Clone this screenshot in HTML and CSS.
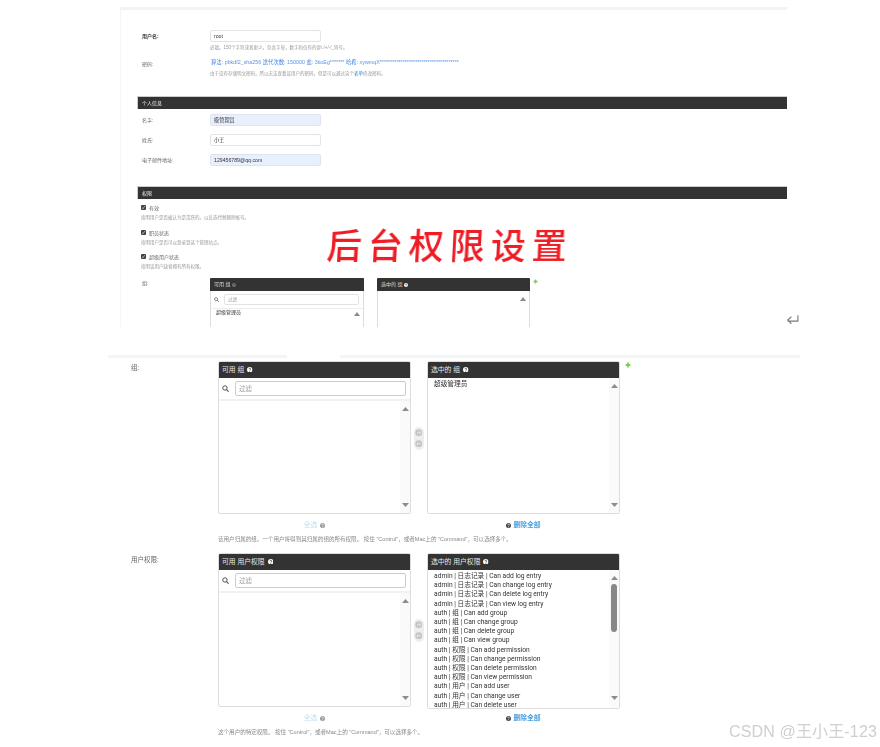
FILE: index.html
```html
<!DOCTYPE html>
<html lang="zh-CN">
<head>
<meta charset="utf-8">
<title>后台权限设置</title>
<link rel="stylesheet" href="styles.css">
</head>
<body>
<svg class="defs" width="0" height="0" aria-hidden="true">
  <symbol id="i-q" viewBox="0 0 10 10"><circle cx="5" cy="5" r="5" fill="currentColor"/><path class="q-mark" d="M3.400 4a1.700 1.600 0 1 1 2.400 1.400c-.6.3-.8.6-.8 1.100M5 7.200v1.200" fill="none" stroke-width="1.300"/></symbol>
  <symbol id="i-search" viewBox="0 0 10 10"><circle cx="4.200" cy="4.200" r="3.100" fill="none" stroke="currentColor" stroke-width="1.300"/><path d="M6.500 6.500 9.400 9.400" stroke="currentColor" stroke-width="1.600"/></symbol>
  <symbol id="i-plus" viewBox="0 0 10 10"><path d="M5 1v8M1 5h8" stroke="#7ed04b" stroke-width="3"/></symbol>
  <symbol id="i-add" viewBox="0 0 10 10"><circle cx="5" cy="5" r="4.600" fill="#c6c6c6"/><path d="M2.500 5h5M5.400 3l2.100 2-2.100 2" fill="none" stroke="#eee" stroke-width="1"/></symbol>
  <symbol id="i-rem" viewBox="0 0 10 10"><circle cx="5" cy="5" r="4.600" fill="#c6c6c6"/><path d="M2.500 5h5M4.600 3 2.500 5l2.100 2" fill="none" stroke="#eee" stroke-width="1"/></symbol>
  <symbol id="i-up" viewBox="0 0 10 6" preserveAspectRatio="none"><path d="M5 0 10 6H0z" fill="#8c8c8c"/></symbol>
  <symbol id="i-down" viewBox="0 0 10 6" preserveAspectRatio="none"><path d="M5 6 10 0H0z" fill="#8c8c8c"/></symbol>
</svg>

<div class="canvas">
  <section class="shot-a">
    <div class="row">
      <span class="label label-strong">用户名:</span>
      <span class="input">root</span>
    </div>
    <p class="help help-first">必填。150个字符或者更少。包含字母，数字和仅有的@/./+/-/_符号。</p>
    <div class="row row-pass">
      <span class="label label-pass">密码:</span>
      <span class="hash"><b>算法:</b> pbkdf2_sha256 <b>迭代次数:</b> 150000 <b>盐:</b> 3tioEg******* <b>哈希:</b> xywmqX**************************************</span>
    </div>
    <p class="help help-pass">由于没有存储明文密码，所以无法查看该用户的密码，但是可以通过这个<a class="help-link">表单</a>修改密码。</p>

    <h2 class="bar bar-first">个人信息</h2>
    <div class="row row-first"><span class="label">名字:</span><span class="input input-fill">级管理员</span></div>
    <div class="row row-next"><span class="label">姓氏:</span><span class="input">小王</span></div>
    <div class="row row-next"><span class="label">电子邮件地址:</span><span class="input input-fill">129456789@qq.com</span></div>

    <h2 class="bar">权限</h2>
    <div class="checks">
      <div class="check-item">
        <div class="check"><span class="box">✓</span>有效</div>
        <p class="help help-check">指明用户是否被认为是活跃的。以反选代替删除帐号。</p>
      </div>
      <div class="check-item">
        <div class="check"><span class="box">✓</span>职员状态</div>
        <p class="help help-check">指明用户是否可以登录到这个管理站点。</p>
      </div>
      <div class="check-item">
        <div class="check"><span class="box">✓</span>超级用户状态</div>
        <p class="help help-check">指明该用户缺省拥有所有权限。</p>
      </div>
    </div>
    <div class="row row-group">
      <span class="label">组:</span>
      <div class="mini-sel">
        <div class="mini-head">可用 组 <svg class="mini-q q-dim"><use href="#i-q"/></svg></div>
        <div class="mini-filter"><svg class="mini-search"><use href="#i-search"/></svg><span class="mini-input">过滤</span></div>
        <div class="mini-list"><span>超级管理员</span><svg class="arrow"><use href="#i-up"/></svg></div>
      </div>
      <div class="mini-sel mini-sel-b">
        <div class="mini-head">选中的 组 <svg class="mini-q"><use href="#i-q"/></svg></div>
        <div class="mini-list mini-list-b"><svg class="arrow"><use href="#i-up"/></svg></div>
      </div>
      <svg class="mini-plus"><use href="#i-plus"/></svg>
    </div>
  </section>

  <div class="title">后台权限设置</div>
  <svg class="enter" viewBox="0 0 12 11"><path d="M11 1v5.500H1.500M5 2.500 1.500 5.500 5 9" fill="none" stroke="#777" stroke-width="1"/></svg>

  <section class="shot-b">
    <div class="strip"><i></i><i></i></div>

    <div class="big-row">
      <span class="big-label">组:</span>
      <div class="big-sel">
        <div class="big-head">可用 组 <svg class="big-q q-dim"><use href="#i-q"/></svg></div>
        <div class="big-filter"><svg class="big-search"><use href="#i-search"/></svg><span class="big-input">过滤</span></div>
        <div class="big-list"><div class="track"><svg class="arrow"><use href="#i-up"/></svg><svg class="arrow"><use href="#i-down"/></svg></div></div>
      </div>
      <div class="mover"><svg><use href="#i-add"/></svg><svg><use href="#i-rem"/></svg></div>
      <div class="big-sel">
        <div class="big-head">选中的 组 <svg class="big-q"><use href="#i-q"/></svg></div>
        <div class="big-list"><div class="items"><div>超级管理员</div></div><div class="track"><svg class="arrow"><use href="#i-up"/></svg><svg class="arrow"><use href="#i-down"/></svg></div></div>
      </div>
      <svg class="big-plus"><use href="#i-plus"/></svg>
    </div>
    <div class="foot">
      <span class="foot-l">全选 <svg class="foot-q q-dim"><use href="#i-q"/></svg></span>
      <span class="foot-r"><svg class="foot-q"><use href="#i-q"/></svg> <a>删除全部</a></span>
    </div>
    <p class="big-help">该用户归属的组。一个用户将得到其归属的组的所有权限。 按住 "Control"，或者Mac上的 "Command"，可以选择多个。</p>

    <div class="big-row big-row-2">
      <span class="big-label">用户权限:</span>
      <div class="big-sel">
        <div class="big-head">可用 用户权限 <svg class="big-q q-dim"><use href="#i-q"/></svg></div>
        <div class="big-filter"><svg class="big-search"><use href="#i-search"/></svg><span class="big-input">过滤</span></div>
        <div class="big-list"><div class="track"><svg class="arrow"><use href="#i-up"/></svg><svg class="arrow"><use href="#i-down"/></svg></div></div>
      </div>
      <div class="mover"><svg><use href="#i-add"/></svg><svg><use href="#i-rem"/></svg></div>
      <div class="big-sel big-sel-tall">
        <div class="big-head">选中的 用户权限 <svg class="big-q"><use href="#i-q"/></svg></div>
        <div class="big-list">
          <div class="items">
            <div>admin | 日志记录 | Can add log entry</div>
            <div>admin | 日志记录 | Can change log entry</div>
            <div>admin | 日志记录 | Can delete log entry</div>
            <div>admin | 日志记录 | Can view log entry</div>
            <div>auth | 组 | Can add group</div>
            <div>auth | 组 | Can change group</div>
            <div>auth | 组 | Can delete group</div>
            <div>auth | 组 | Can view group</div>
            <div>auth | 权限 | Can add permission</div>
            <div>auth | 权限 | Can change permission</div>
            <div>auth | 权限 | Can delete permission</div>
            <div>auth | 权限 | Can view permission</div>
            <div>auth | 用户 | Can add user</div>
            <div>auth | 用户 | Can change user</div>
            <div>auth | 用户 | Can delete user</div>
          </div>
          <div class="track track-thumb"><svg class="arrow"><use href="#i-up"/></svg><span class="thumb"></span><svg class="arrow arrow-end"><use href="#i-down"/></svg></div>
        </div>
      </div>
    </div>
    <div class="foot foot-2">
      <span class="foot-l">全选 <svg class="foot-q q-dim"><use href="#i-q"/></svg></span>
      <span class="foot-r"><svg class="foot-q"><use href="#i-q"/></svg> <a>删除全部</a></span>
    </div>
    <p class="big-help">这个用户的特定权限。 按住 "Control"，或者Mac上的 "Command"，可以选择多个。</p>
  </section>

  <div class="watermark">CSDN @王小王-123</div>
</div>
</body>
</html>
```
FILE: styles.css
```css
* { box-sizing: border-box; }
html, body { margin: 0; padding: 0; background: #fff; }
body { font-family: "Liberation Sans", "Noto Sans CJK SC", sans-serif; color: #333; }
.defs { position: absolute; }
.q-mark { stroke: var(--q-mark, #fff); }
p, h2 { margin: 0; }
.canvas { position: relative; width: 880px; height: 747px; overflow: hidden; padding-top: 7px; }

/* upper screenshot */
.shot-a { width: 667px; height: 320px; margin-left: 120px; border-top: 3px solid #f2f3f6; border-left: 1px solid #f2f5fa; overflow: hidden; filter: blur(.35px); padding-top: 20px; }
.row { display: flex; margin-left: 21px; }
.label { width: 68px; font-size: 5px; line-height: 12px; color: #666; flex: none; }
.label-strong { color: #333; font-weight: bold; }
.input { width: 111px; height: 12px; border: 1px solid #e3e3e3; border-radius: 2px; font-size: 5.200px; line-height: 10px; padding-left: 3px; color: #333; background: #fff; flex: none; }
.input-fill { background: #e8f0fe; border-color: #dde4f0; }
.help { font-size: 4.500px; line-height: 6px; color: #999; white-space: nowrap; }
.help-first { margin: 3px 0 0 89px; }
.row-pass { margin-top: 7px; height: 8px; }
.label-pass { line-height: 12px; height: 8px; }
.hash { font-size: 5.350px; line-height: 8px; color: #5a93e6; white-space: nowrap; margin-left: 1px; }
.hash b { font-weight: normal; color: #3d7fe0; }
.help-pass { margin: 5px 0 0 89px; }
.help-link { color: #2a8ad8; }
.bar { margin: 20px 0 0 16px; height: 13px; background: #333; color: #eee; font-size: 5px; font-weight: normal; line-height: 13px; padding-left: 4px; border: 1px solid #ccc; border-width: 1px 0 0 1px; }
.bar-first { margin-top: 19px; }
.row-first { margin-top: 5px; }
.row-next { margin-top: 8px; }
.checks { margin: 5px 0 0 20px; display: flex; flex-direction: column; gap: 7.500px; }
.check { display: flex; align-items: center; height: 7px; font-size: 5px; color: #666; }
.box { width: 5px; height: 5px; margin-right: 3px; background: #444; border-radius: 1px; color: #fff; font-size: 4px; line-height: 5px; text-align: center; }
.help-check { margin-top: 4px; }
.row-group { margin-top: 8px; }
.row-group .label { line-height: 10px; }
.mini-sel { width: 154px; flex: none; border: 1px solid #ddd; border-top: 0; height: 60px; }
.mini-sel-b { width: 153px; margin-left: 13px; }
.mini-head { height: 13px; margin: 0 -1px; background: #333; font-size: 5px; line-height: 13px; padding-left: 4px; display: flex; align-items: center; gap: 2px; border-radius: 1px 1px 0 0; color: #ddd; }
.mini-q { width: 4px; height: 4px; color: #fff; --q-mark: #333; }
.q-dim { color: #777; --q-mark: #333; }
.mini-filter { display: flex; align-items: center; height: 18px; border-bottom: 1px solid #eee; padding-left: 3px; }
.mini-search { width: 5px; height: 5px; color: #555; margin-right: 5px; }
.mini-input { width: 135px; height: 11px; border: 1px solid #e3e3e3; border-radius: 2px; font-size: 4.500px; line-height: 9px; padding-left: 3px; color: #999; }
.mini-list { display: flex; justify-content: space-between; font-size: 5px; line-height: 7px; padding: 0 3px 0 5px; color: #333; }
.mini-list-b { justify-content: flex-end; padding-top: 3px; }
.arrow { width: 6px; height: 4px; margin-top: 3px; flex: none; }
.mini-plus { width: 5px; height: 5px; margin: 1px 0 0 3px; }

/* lower screenshot */
.shot-b { width: 692px; margin: 28px 0 0 108px; filter: blur(.3px); }
.strip { display: flex; height: 3px; gap: 53px; }
.strip i { background: #f2f4f8; flex: 1 1 460px; }
.strip i:first-child { flex: 0 0 179px; }
.big-row { display: flex; align-items: flex-start; margin: 3px 0 0 23px; position: relative; }
.big-row-2 { margin-top: 10px; }
.big-label { width: 87px; flex: none; font-size: 6.500px; line-height: 14px; color: #666; }
.big-sel { width: 193px; height: 153px; flex: none; border: 1px solid #ddd; border-radius: 2px; display: flex; flex-direction: column; overflow: hidden; }
.big-row-2 .big-sel { height: 154px; }
.big-row-2 .big-sel-tall { height: 156px; }
.big-head { height: 17px; flex: none; margin: -1px -1px 0; background: #333; color: #e8e8e8; font-size: 6.800px; line-height: 18px; padding-left: 4px; display: flex; align-items: center; gap: 3px; }
.big-q { width: 5.500px; height: 5.500px; color: #fff; --q-mark: #333; }
.big-filter { display: flex; align-items: center; height: 23px; flex: none; border-bottom: 2px solid #f1f1f1; padding-left: 3px; }
.big-search { width: 7px; height: 7px; color: #444; margin-right: 6px; }
.big-input { width: 171px; height: 15px; border: 1px solid #ccc; border-radius: 2px; font-size: 6.500px; line-height: 13px; padding-left: 3px; color: #999; }
.big-list { flex: 1; display: flex; justify-content: flex-end; min-height: 0; position: relative; }
.items { flex: 1; padding: 2px 0 0 6px; font-family: Roboto, "Noto Sans CJK SC", sans-serif; font-size: 6.700px; line-height: 9.200px; color: #333; white-space: nowrap; overflow: hidden; }
.track { width: 10px; flex: none; background: #fafafa; display: flex; flex-direction: column; justify-content: space-between; align-items: center; padding: 6px 0 6px; }
.track .arrow { width: 7px; margin: 0; }
.track-thumb { justify-content: flex-start; padding-bottom: 8px; }
.thumb { width: 5.500px; height: 48px; background: #888; border-radius: 3px; margin-top: 4px; }
.arrow-end { margin-top: auto !important; }
.mover { width: 10px; height: 23px; margin: 66px 3px 0; display: flex; flex-direction: column; align-items: center; justify-content: center; gap: 3.500px; background: #eee; border-radius: 5px; }
.mover svg { width: 7.500px; height: 7.500px; }
.big-plus { position: absolute; left: 494px; top: 1px; width: 6px; height: 6px; }
.foot { display: flex; margin: 6px 0 0 110px; height: 10px; font-size: 6.800px; line-height: 10px; }
.foot-2 { margin-top: 4px; }
.foot-l { width: 193px; margin-right: 16px; text-align: center; color: #bfe0f5; display: flex; justify-content: center; align-items: center; gap: 3px; }
.foot-r { width: 193px; display: flex; justify-content: center; align-items: center; gap: 2px; color: #444; }
.foot-r a { color: #4a9fe0; font-weight: bold; }
.foot-q { width: 5px; height: 5px; }
.foot-l .q-dim { color: #999; --q-mark: #fff; }
.big-help { margin: 5px 0 0 110px; font-size: 5.550px; line-height: 8px; color: #888; white-space: nowrap; }

/* overlays */
.title { position: absolute; left: 327px; top: 223px; font-family: "Noto Sans CJK SC", sans-serif; font-weight: 500; font-size: 35px; line-height: 42px; letter-spacing: 6px; color: #ee1c25; white-space: nowrap; transform: skewX(-3deg); }
.enter { position: absolute; left: 786px; top: 314px; width: 13px; height: 12px; }
.watermark { position: absolute; left: 729px; top: 721px; font-family: "Liberation Sans", "Noto Sans CJK SC", sans-serif; font-size: 16px; line-height: 22px; letter-spacing: .15px; color: #cfcfcf; white-space: nowrap; }
```
